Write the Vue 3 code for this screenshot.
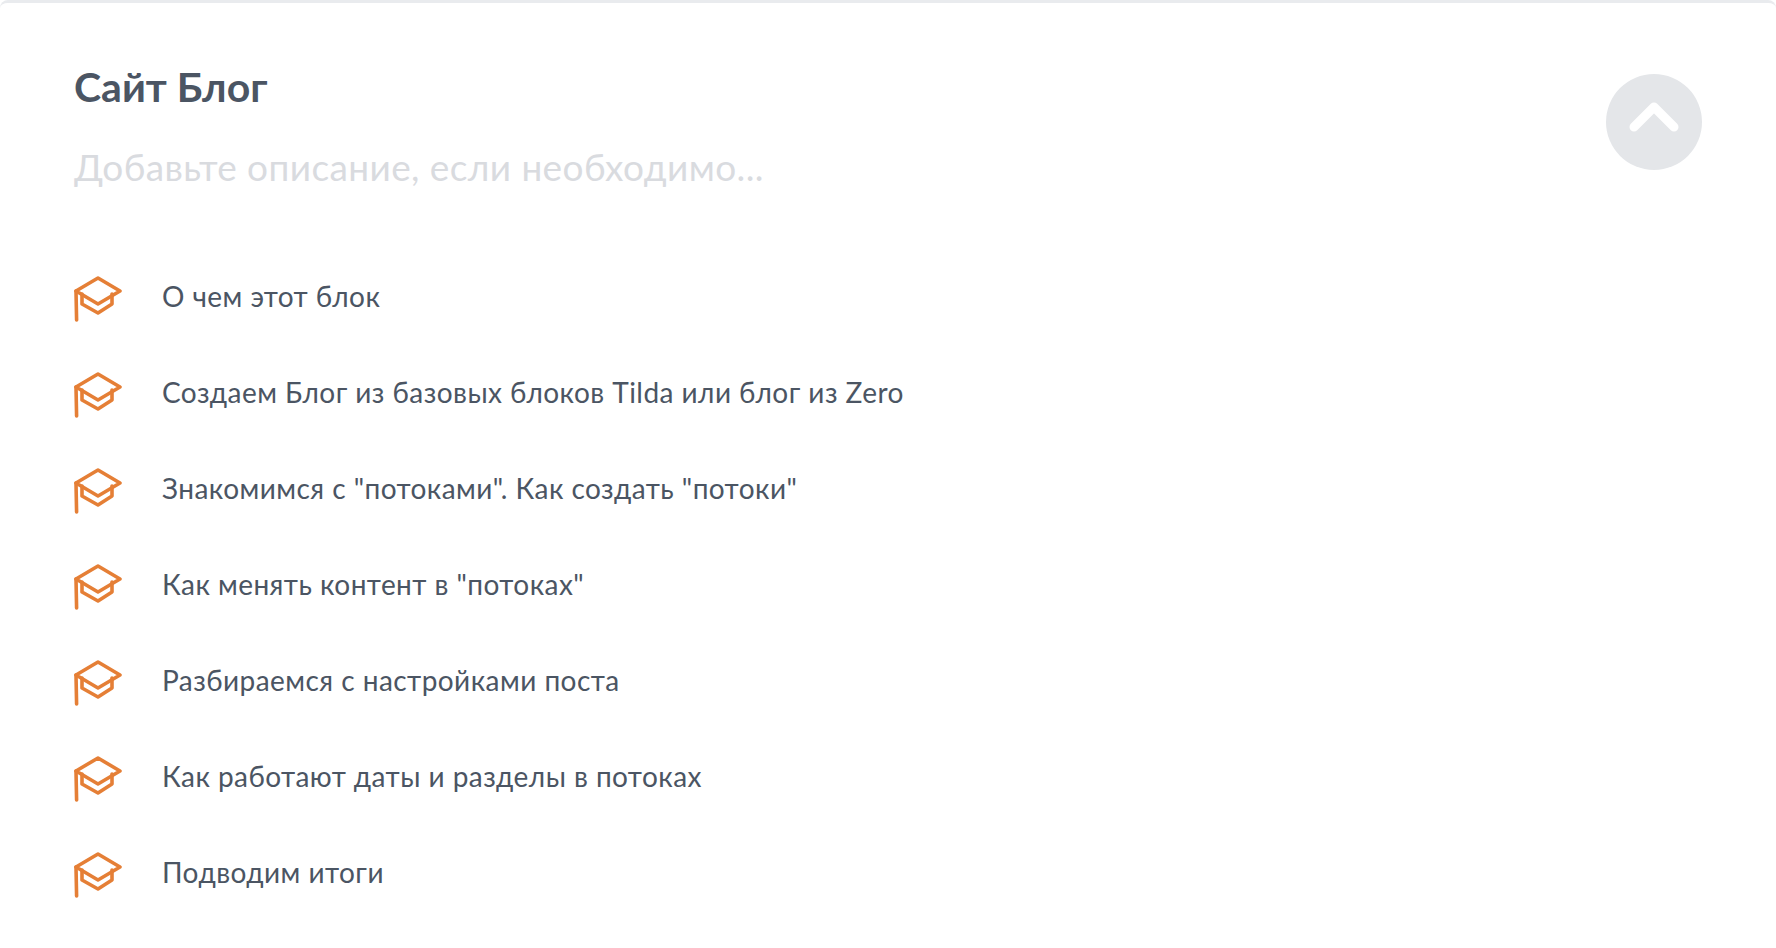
<script setup>
const lessons = [
  'О чем этот блок',
  'Создаем Блог из базовых блоков Tilda или блог из Zero',
  'Знакомимся с "потоками". Как создать "потоки"',
  'Как менять контент в "потоках"',
  'Разбираемся с настройками поста',
  'Как работают даты и разделы в потоках',
  'Подводим итоги'
]
</script>

<template>
  <div class="card">
    <div class="head">
      <div>
        <h1 class="title">Сайт Блог</h1>
        <p class="desc">Добавьте описание, если необходимо...</p>
      </div>
      <div class="toggle">
        <svg width="96" height="96" viewBox="0 0 96 96">
          <path d="M28 53 L48 33 L68 53" fill="none" stroke="#fff" stroke-width="9" stroke-linecap="round" stroke-linejoin="round" />
        </svg>
      </div>
    </div>
    <ul class="list">
      <li v-for="(item, index) in lessons" :key="index" class="row">
        <svg class="cap" width="48" height="46" viewBox="0 0 48 46">
          <g fill="none" stroke="#e57f36" stroke-width="3.6" stroke-linecap="round" stroke-linejoin="round">
            <path d="M24 2 L46 15 L24 28 L2 15 Z" />
            <path d="M8 18 V28 L24 37 L38 28 V18" />
            <path d="M2 15 L2.6 44" />
          </g>
        </svg>
        <span class="name">{{ item }}</span>
      </li>
    </ul>
  </div>
</template>

<style scoped>
.card {
  box-sizing: border-box;
  height: 948px;
  border-top: 3px solid #e9ebee;
  border-radius: 8px 8px 0 0;
  padding: 59px 74px 0;
  font-family: Lato, "Noto Sans", sans-serif;
  overflow: hidden;
}
.head {
  display: flex;
  justify-content: space-between;
  align-items: flex-start;
  height: 186px;
}
.title {
  margin: 0;
  font-size: 41px;
  line-height: 50px;
  font-weight: 700;
  color: #4b5563;
}
.desc {
  margin: 30px 0 0;
  font-size: 37px;
  line-height: 50px;
  letter-spacing: 0.4px;
  color: #d9dbdf;
}
.toggle {
  width: 96px;
  height: 96px;
  margin-top: 12px;
  border-radius: 50%;
  background: #e4e6e9;
}
.list {
  list-style: none;
  margin: 0;
  padding: 0;
}
.row {
  display: flex;
  align-items: center;
  height: 96px;
}
.cap {
  flex: none;
  margin: 6px 40px 0 0;
}
.name {
  font-size: 28px;
  letter-spacing: 0.45px;
  color: #4b5563;
}
</style>

<style>
body { background: #fff; }
</style>
